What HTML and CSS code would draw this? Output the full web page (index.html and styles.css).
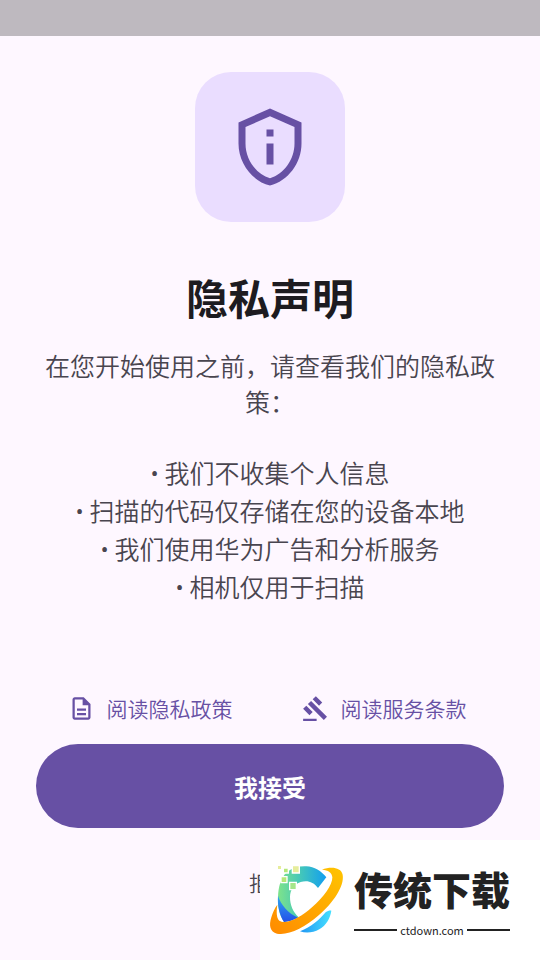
FILE: index.html
```html
<!DOCTYPE html>
<html lang="zh-CN">
<head>
    <meta charset="utf-8">
    <meta name="viewport" content="width=device-width, initial-scale=1">
    <title>隐私声明</title>
    <link rel="stylesheet" href="styles.css">
</head>

<body>
<div class="statusbar"></div>

<main class="page">
    <div class="hero">
        <svg class="hero-icon" viewBox="0 0 24 24" aria-hidden="true">
            <path d="M12 3.19l7 3.11V11c0 4.52-2.98 8.69-7 9.93-4.02-1.24-7-5.41-7-9.93V6.3l7-3.11M12 1L3 5v6c0 5.55 3.84 10.74 9 12 5.16-1.26 9-6.45 9-12V5l-9-4zM11 7h2v2h-2V7zm0 4h2v6h-2v-6z"/>
        </svg>
    </div>

    <h1>隐私声明</h1>
    <p class="intro">在您开始使用之前，请查看我们的隐私政策：</p>

    <ul class="points">
        <li>• 我们不收集个人信息</li>
        <li>• 扫描的代码仅存储在您的设备本地</li>
        <li>• 我们使用华为广告和分析服务</li>
        <li>• 相机仅用于扫描</li>
    </ul>

    <div class="actions">
        <div class="links">
            <a class="link" href="#privacy">
                <svg viewBox="0 0 24 24" aria-hidden="true">
                    <path d="M8 16h8v2H8zm0-4h8v2H8zm6-10H6c-1.100 0-2 .9-2 2v16c0 1.100.89 2 1.990 2H18c1.100 0 2-.9 2-2V8l-6-6zm4 18H6V4h7v5h5v11z"/>
                </svg>
                阅读隐私政策
            </a>
            <a class="link" href="#terms">
                <svg viewBox="0 0 24 24" aria-hidden="true">
                    <path d="M1 21h12v2H1zM5.245 8.070l2.830-2.827 14.140 14.142-2.828 2.828zM12.317 1l5.657 5.656-2.830 2.830-5.654-5.660zM3.825 9.485l5.657 5.657-2.828 2.828-5.657-5.657z"/>
                </svg>
                阅读服务条款
            </a>
        </div>
        <button type="button" class="accept">我接受</button>
        <button type="button" class="reject">拒绝</button>
    </div>
</main>

<aside class="brand">
    <svg class="brand-logo" viewBox="0 0 270 270" aria-hidden="true">
        <defs>
            <linearGradient id="ring" x1="0" y1="1" x2="1" y2="0">
                <stop offset="0" stop-color="#ff8a00"/>
                <stop offset="1" stop-color="#ffc400"/>
            </linearGradient>
            <linearGradient id="arc" x1="0" y1="0" x2="1" y2="0">
                <stop offset="0" stop-color="#7fe38a"/>
                <stop offset="0.450" stop-color="#45c8b8"/>
                <stop offset="1" stop-color="#129ef0"/>
            </linearGradient>
            <linearGradient id="tail" x1="0" y1="0" x2="1" y2="0">
                <stop offset="0" stop-color="#2196f3"/>
                <stop offset="1" stop-color="#45e0ff"/>
            </linearGradient>
            <linearGradient id="shade" x1="0" y1="0" x2="0" y2="1">
                <stop offset="0" stop-color="#2fa8f0"/>
                <stop offset="1" stop-color="#2450e8"/>
            </linearGradient>
        </defs>
        <path fill="url(#arc)" d="M74 52C92 38 112 33 133 34C157 35 178 48 193 67L168 99C154 80 136 75 116 81C96 88 84 105 84 126C84 150 93 171 110 187C95 194 80 200 66 201C52 180 47 156 48 126C49 96 56 70 74 52Z"/>
        <path fill="url(#shade)" d="M48 122C57 150 78 174 108 188C94 195 80 200 66 201C52 178 46 152 48 122Z"/>
        <path fill="url(#tail)" d="M208 167C205 190 192 211 172 223C154 233 133 236 114 229C147 217 174 192 191 172C197 168 203 166 208 167Z"/>
        <path fill="url(#ring)" d="M180 44C207 34 237 37 242 59C248 93 213 144 170 181C128 218 78 243 45 236C24 231 20 211 28 187C32 173 38 160 46 149C43 170 43 188 52 197C73 211 116 187 150 157C184 127 212 90 211 67C210 53 199 45 180 44Z"/>
        <g stroke="#fff" stroke-width="4">
            <path fill="#e6ed9b" d="M46 31h13v13H46zM91 32h21v22H91z"/>
            <path fill="#b5e878" d="M64 39h15v15H64zM57 65h18v18H57z"/>
            <path fill="#a5e68a" d="M83 82h20v22H83z"/>
        </g>
    </svg>
    <div class="brand-text">
        <strong class="brand-name">传统下载</strong>
        <span class="brand-url">ctdown.com</span>
    </div>
</aside>
</body>
</html>
```

FILE: styles.css
```css
* {
    box-sizing: border-box;
}

body {
    margin: 0;
    min-height: 100vh;
    display: flex;
    flex-direction: column;
    background: #fef7ff;
    color: #49454f;
    font-family: Roboto, "Noto Sans CJK SC", sans-serif;
    text-align: center;
}

.statusbar {
    height: 36px;
    background: #beb9bf;
}

.page {
    flex: 1;
    display: flex;
    flex-direction: column;
    padding: 36px 36px 42px;
}

/* Rounded tile with the shield */
.hero {
    align-self: center;
    display: flex;
    padding: 33px;
    border-radius: 36px;
    background: #eaddff;
}

.hero-icon {
    width: 84px;
    height: 84px;
    fill: #6750a4;
}

h1 {
    margin: 52px 0 22px;
    color: #1d1b20;
    font-size: 42px;
    line-height: 54px;
    font-weight: 700;
}

.intro {
    margin: 0 0 34px;
    font-size: 25px;
    line-height: 36px;
    font-weight: 350;
}

.points {
    margin: 0 0 36px;
    padding: 0;
    list-style: none;
    font-size: 25px;
    line-height: 38px;
    font-weight: 350;
}

/* Links and buttons stay at the bottom of the page */
.actions {
    display: flex;
    flex-direction: column;
    margin-top: auto;
}

.links {
    display: flex;
    justify-content: space-around;
}

.link {
    display: flex;
    align-items: center;
    gap: 12px;
    height: 72px;
    padding: 0 24px 0 18px;
    color: #6750a4;
    font-size: 21px;
    font-weight: 350;
    text-decoration: none;
}

.link svg {
    width: 27px;
    height: 27px;
    fill: #6750a4;
}

button {
    border: none;
    font-family: inherit;
    cursor: pointer;
}

.accept {
    height: 84px;
    border-radius: 42px;
    background: #6750a4;
    color: #fff;
    font-size: 24px;
    font-weight: 700;
}

.reject {
    height: 72px;
    margin-top: 18px;
    background: none;
    color: #49454f;
    font-size: 21px;
    font-weight: 350;
}

/* Brand badge over the bottom right corner */
.brand {
    position: fixed;
    right: 0;
    bottom: 0;
    display: flex;
    align-items: center;
    gap: 2px;
    width: 280px;
    height: 120px;
    background: #fff;
    color: #222;
}

.brand-logo {
    width: 90px;
    height: 90px;
    margin-left: 2px;
}

.brand-text {
    display: flex;
    flex-direction: column;
}

.brand-name {
    font-size: 39px;
    line-height: 60px;
    font-weight: 900;
}

.brand-url {
    display: flex;
    align-items: center;
    gap: 3px;
    font-family: "Noto Sans CJK SC", sans-serif;
    font-size: 11px;
    line-height: 16px;
}

.brand-url::before,
.brand-url::after {
    content: "";
    flex: 1;
    height: 2px;
    background: #222;
}
```
